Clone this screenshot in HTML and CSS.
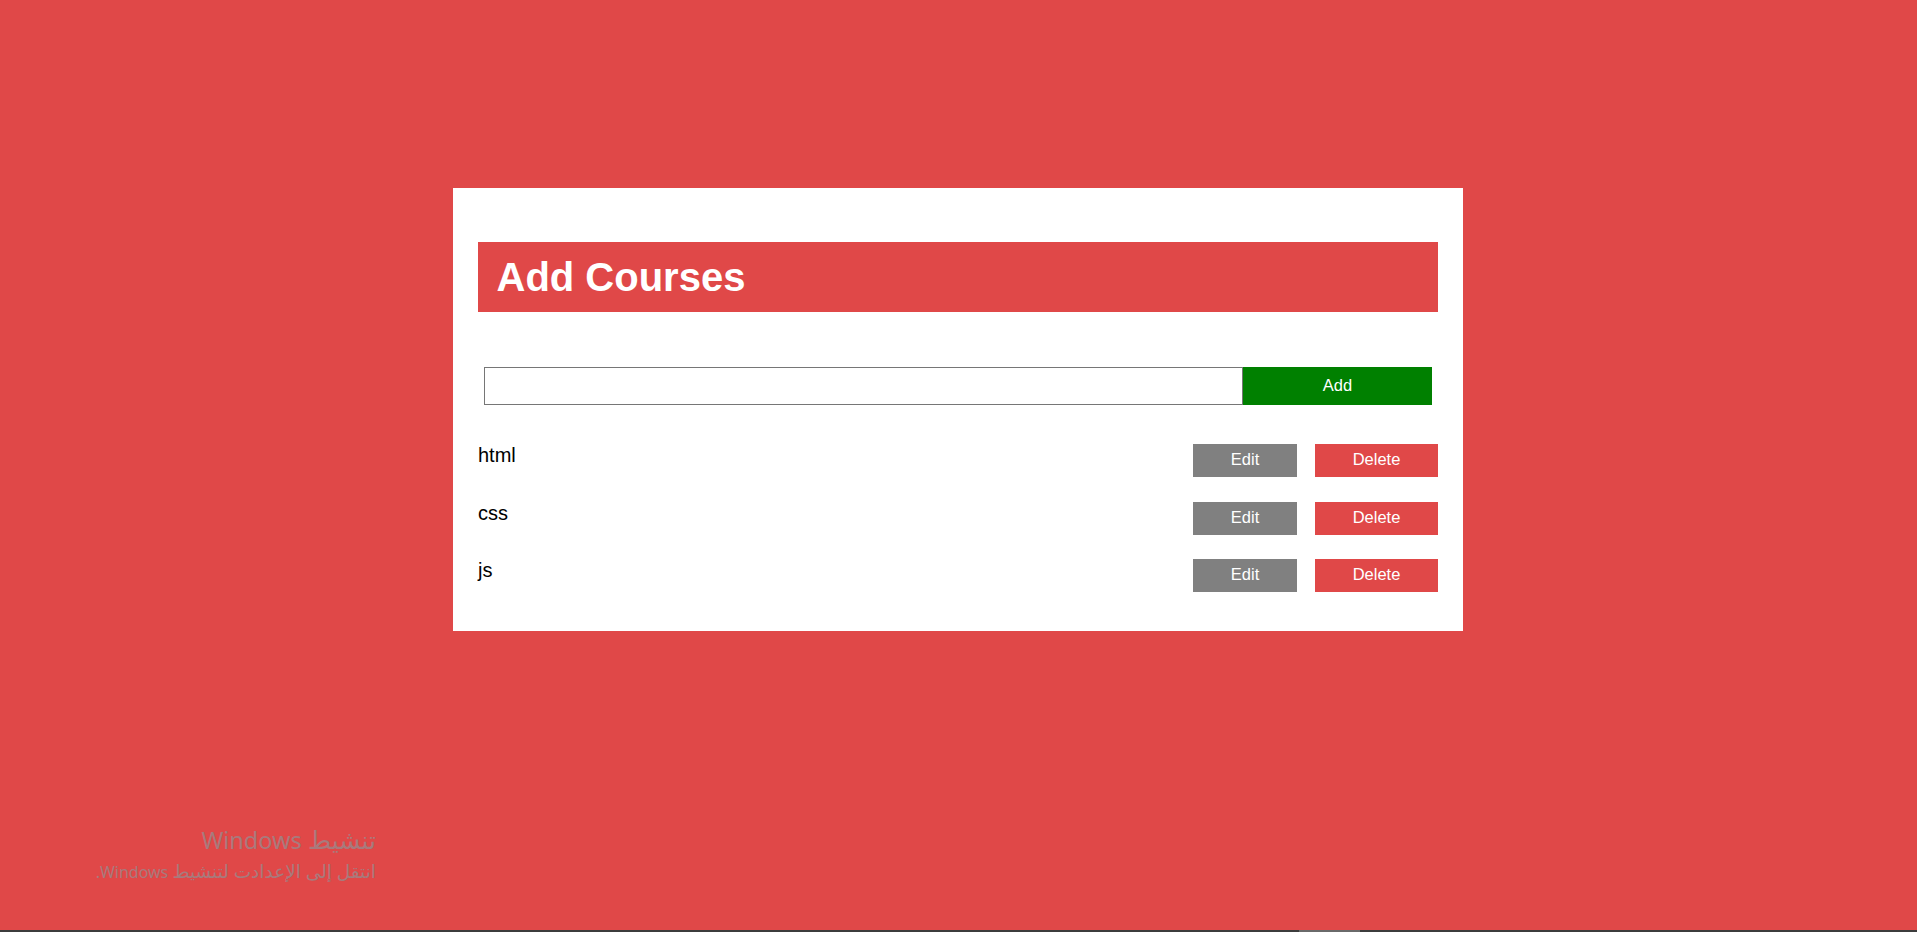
FILE: index.html
```html
<!DOCTYPE html>
<html lang="en">
<head>
<meta charset="utf-8">
<title>Add Courses</title>
<link rel="stylesheet" href="styles.css">
</head>
<body>
<main class="page">
  <section class="card">
    <header class="card-head">
      <h1 class="title">Add Courses</h1>
    </header>
    <form class="add-row">
      <input class="add-input" type="text">
      <button class="add-btn" type="button">Add</button>
    </form>
    <ul class="list">
      <li class="item">
        <span class="item-name">html</span>
        <div class="actions">
          <button class="btn btn-edit" type="button">Edit</button>
          <button class="btn btn-delete" type="button">Delete</button>
        </div>
      </li>
      <li class="item">
        <span class="item-name">css</span>
        <div class="actions">
          <button class="btn btn-edit" type="button">Edit</button>
          <button class="btn btn-delete" type="button">Delete</button>
        </div>
      </li>
      <li class="item">
        <span class="item-name">js</span>
        <div class="actions">
          <button class="btn btn-edit" type="button">Edit</button>
          <button class="btn btn-delete" type="button">Delete</button>
        </div>
      </li>
    </ul>
  </section>
</main>
<div class="watermark" dir="rtl">
  <div class="wm-title"><span class="ar">تنشيط</span> Windows</div>
  <div class="wm-sub"><span class="ar">انتقل إلى الإعدادت لتنشيط</span> Windows.</div>
</div>
<div class="taskbar"><span class="taskbar-item"></span></div>
</body>
</html>
```

FILE: styles.css
```css
html, body {
  margin: 0;
  padding: 0;
  height: 100%;
}

body {
  background: #e04848;
  font-family: "Liberation Sans", Arial, sans-serif;
  overflow: hidden;
}

.page {
  display: flex;
  justify-content: center;
  padding-top: 188px;
}

.card {
  box-sizing: border-box;
  width: 1010px;
  margin-right: 1px;
  background: #ffffff;
  padding: 54px 25px 39px 25px;
}

.card-head {
  display: flex;
  align-items: center;
  height: 70px;
  padding: 0 0 0 18.5px;
  box-sizing: border-box;
  background: #e04848;
}

.title {
  margin: 0;
  color: #ffffff;
  font-size: 40px;
  font-weight: bold;
  line-height: 1;
}

.add-row {
  display: flex;
  margin: 55px 6px 0 6px;
  height: 38px;
}

.add-input {
  flex: 1;
  box-sizing: border-box;
  height: 38px;
  margin: 0;
  border: 1px solid #767676;
  padding: 0 6px;
  font: inherit;
  outline: none;
}

.add-btn {
  width: 189px;
  height: 38px;
  margin: 0;
  border: none;
  background: #008000;
  color: #ffffff;
  font-family: "Liberation Sans", Arial, sans-serif;
  font-size: 16.5px;
  padding: 0 0 2px 0;
}

.list {
  list-style: none;
  margin: 39px 0 0 0;
  padding: 0;
  display: flex;
  flex-direction: column;
  gap: 24.5px;
}

.item {
  display: flex;
  justify-content: space-between;
  align-items: flex-start;
  height: 33px;
}

.item-name {
  font-size: 20px;
  color: #000000;
}

.actions {
  display: flex;
  gap: 18px;
}

.btn {
  height: 33px;
  margin: 0;
  border: none;
  color: #ffffff;
  font-family: "Liberation Sans", Arial, sans-serif;
  font-size: 16.5px;
  padding: 0 0 2px 0;
}

.btn-edit {
  width: 104px;
  background: #808080;
}

.btn-delete {
  width: 123px;
  background: #e04848;
}

.watermark {
  position: absolute;
  right: calc(100% - 376px);
  top: 822px;
  color: rgb(168, 122, 124);
  font-family: "Noto Sans", "DejaVu Sans", sans-serif;
  text-align: right;
  white-space: nowrap;
}

.wm-title {
  font-size: 23.5px;
  line-height: 34px;
}

.wm-title .ar {
  font-size: 25px;
}

.wm-sub {
  font-size: 16px;
  line-height: 28px;
}

.wm-sub .ar {
  font-size: 18.5px;
}

.taskbar {
  position: fixed;
  left: 0;
  right: 0;
  bottom: 0;
  height: 2px;
  background: #3c3c3c;
}

.taskbar-item {
  position: absolute;
  left: 1299px;
  width: 61px;
  top: 0;
  bottom: 0;
  background: #6a6a6a;
}
```
